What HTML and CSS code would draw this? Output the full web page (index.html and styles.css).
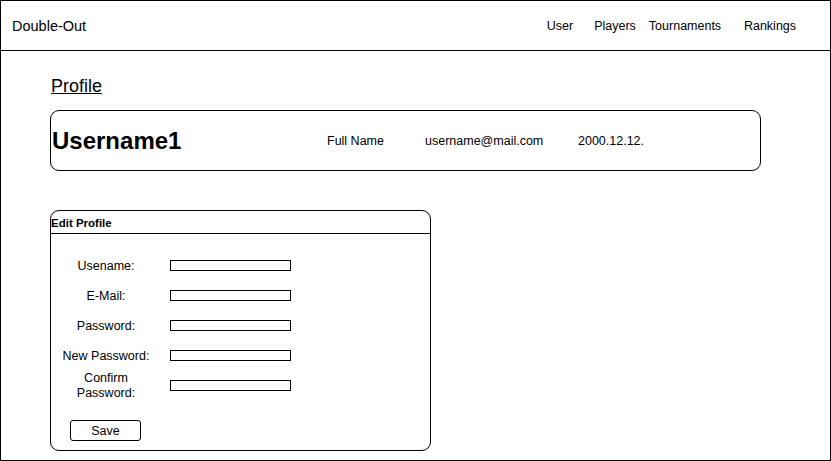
FILE: index.html
```html
<!DOCTYPE html>
<html lang="en">
<head>
    <meta charset="UTF-8">
    <meta name="viewport" content="width=device-width, initial-scale=1.0">
    <title>Double-Out - Profile</title>
    <link rel="stylesheet" href="styles.css">
</head>
<body>
    <div class="frame">
        <header class="topbar">
            <div class="brand">Double-Out</div>
            <nav class="nav">
                <a class="nav-item nav-user" href="#">User</a>
                <a class="nav-item nav-players" href="#">Players</a>
                <a class="nav-item nav-tournaments" href="#">Tournaments</a>
                <a class="nav-item nav-rankings" href="#">Rankings</a>
            </nav>
        </header>

        <main class="content">
            <h1 class="page-title">Profile</h1>

            <section class="profile-card">
                <div class="username">Username1</div>
                <div class="info">Full Name</div>
                <div class="info">username@mail.com</div>
                <div class="info">2000.12.12.</div>
            </section>

            <section class="edit-box">
                <div class="edit-head">Edit Profile</div>
                <form class="edit-form">
                    <div class="fields">
                        <label class="field-label" for="username">Usename:</label>
                        <input class="field-input" id="username" type="text">

                        <label class="field-label" for="email">E-Mail:</label>
                        <input class="field-input" id="email" type="text">

                        <label class="field-label" for="password">Password:</label>
                        <input class="field-input" id="password" type="password">

                        <label class="field-label" for="newPassword">New Password:</label>
                        <input class="field-input" id="newPassword" type="password">

                        <label class="field-label two-line" for="confirmPassword">Confirm<br>Password:</label>
                        <input class="field-input" id="confirmPassword" type="password">
                    </div>
                    <button class="save-btn" type="button">Save</button>
                </form>
            </section>
        </main>
    </div>
</body>
</html>
```

FILE: styles.css
```css
body {
    margin: 0;
    font-family: "Liberation Sans", Arial, sans-serif;
    color: #000;
    background-color: #fff;
}
.frame {
    width: 831px;
    height: 461px;
    border: 1px solid #000;
    box-sizing: border-box;
}
.topbar {
    height: 50px;
    box-sizing: border-box;
    border-bottom: 1px solid #000;
    display: flex;
    align-items: center;
    justify-content: space-between;
    padding: 0 15px 0 11px;
}
.brand {
    font-size: 14.5px;
}
.nav {
    display: flex;
}
.nav-item {
    font-size: 12.5px;
    color: #000;
    text-decoration: none;
    text-align: center;
}
.nav-user { width: 50px; }
.nav-players { width: 60px; }
.nav-tournaments { width: 80px; }
.nav-rankings { width: 90px; }
.content {
    padding-left: 49px;
}
.page-title {
    margin: 25px 0 0 0;
    padding-left: 1px;
    font-size: 18px;
    font-weight: normal;
    line-height: 20px;
    text-decoration: underline;
}
.profile-card {
    margin-top: 14px;
    width: 711px;
    height: 61px;
    box-sizing: border-box;
    border: 1px solid #000;
    border-radius: 9px;
    display: grid;
    grid-template-columns: 276px 98px 153px 1fr;
    align-items: center;
}
.username {
    padding-left: 1px;
    font-size: 24px;
    font-weight: bold;
}
.info {
    font-size: 12.5px;
}
.edit-box {
    margin-top: 39px;
    width: 381px;
    height: 241px;
    box-sizing: border-box;
    border: 1px solid #000;
    border-radius: 9px;
}
.edit-head {
    height: 23px;
    box-sizing: border-box;
    border-bottom: 1px solid #000;
    font-size: 11.5px;
    font-weight: bold;
    display: flex;
    align-items: center;
    padding-top: 1px;
}
.edit-form {
    margin: 0;
    padding-top: 16px;
}
.fields {
    display: grid;
    grid-template-columns: 90px 121px;
    grid-auto-rows: 30px;
    column-gap: 19px;
    align-items: center;
    margin-left: 10px;
}
.field-label {
    padding-top: 2px;
    font-size: 12.5px;
    text-align: center;
}
.two-line {
    padding-top: 1px;
    line-height: 15px;
}
.field-input {
    display: block;
    width: 121px;
    height: 11px;
    box-sizing: border-box;
    border: 1px solid #000;
    padding: 0;
    margin: 0;
    background: #fff;
}
.save-btn {
    display: block;
    margin: 20px 0 0 19px;
    width: 71px;
    height: 21px;
    box-sizing: border-box;
    border: 1px solid #000;
    border-radius: 3px;
    background: #fff;
    font-family: "Liberation Sans", Arial, sans-serif;
    font-size: 12.5px;
    color: #000;
    padding: 0;
}
```
